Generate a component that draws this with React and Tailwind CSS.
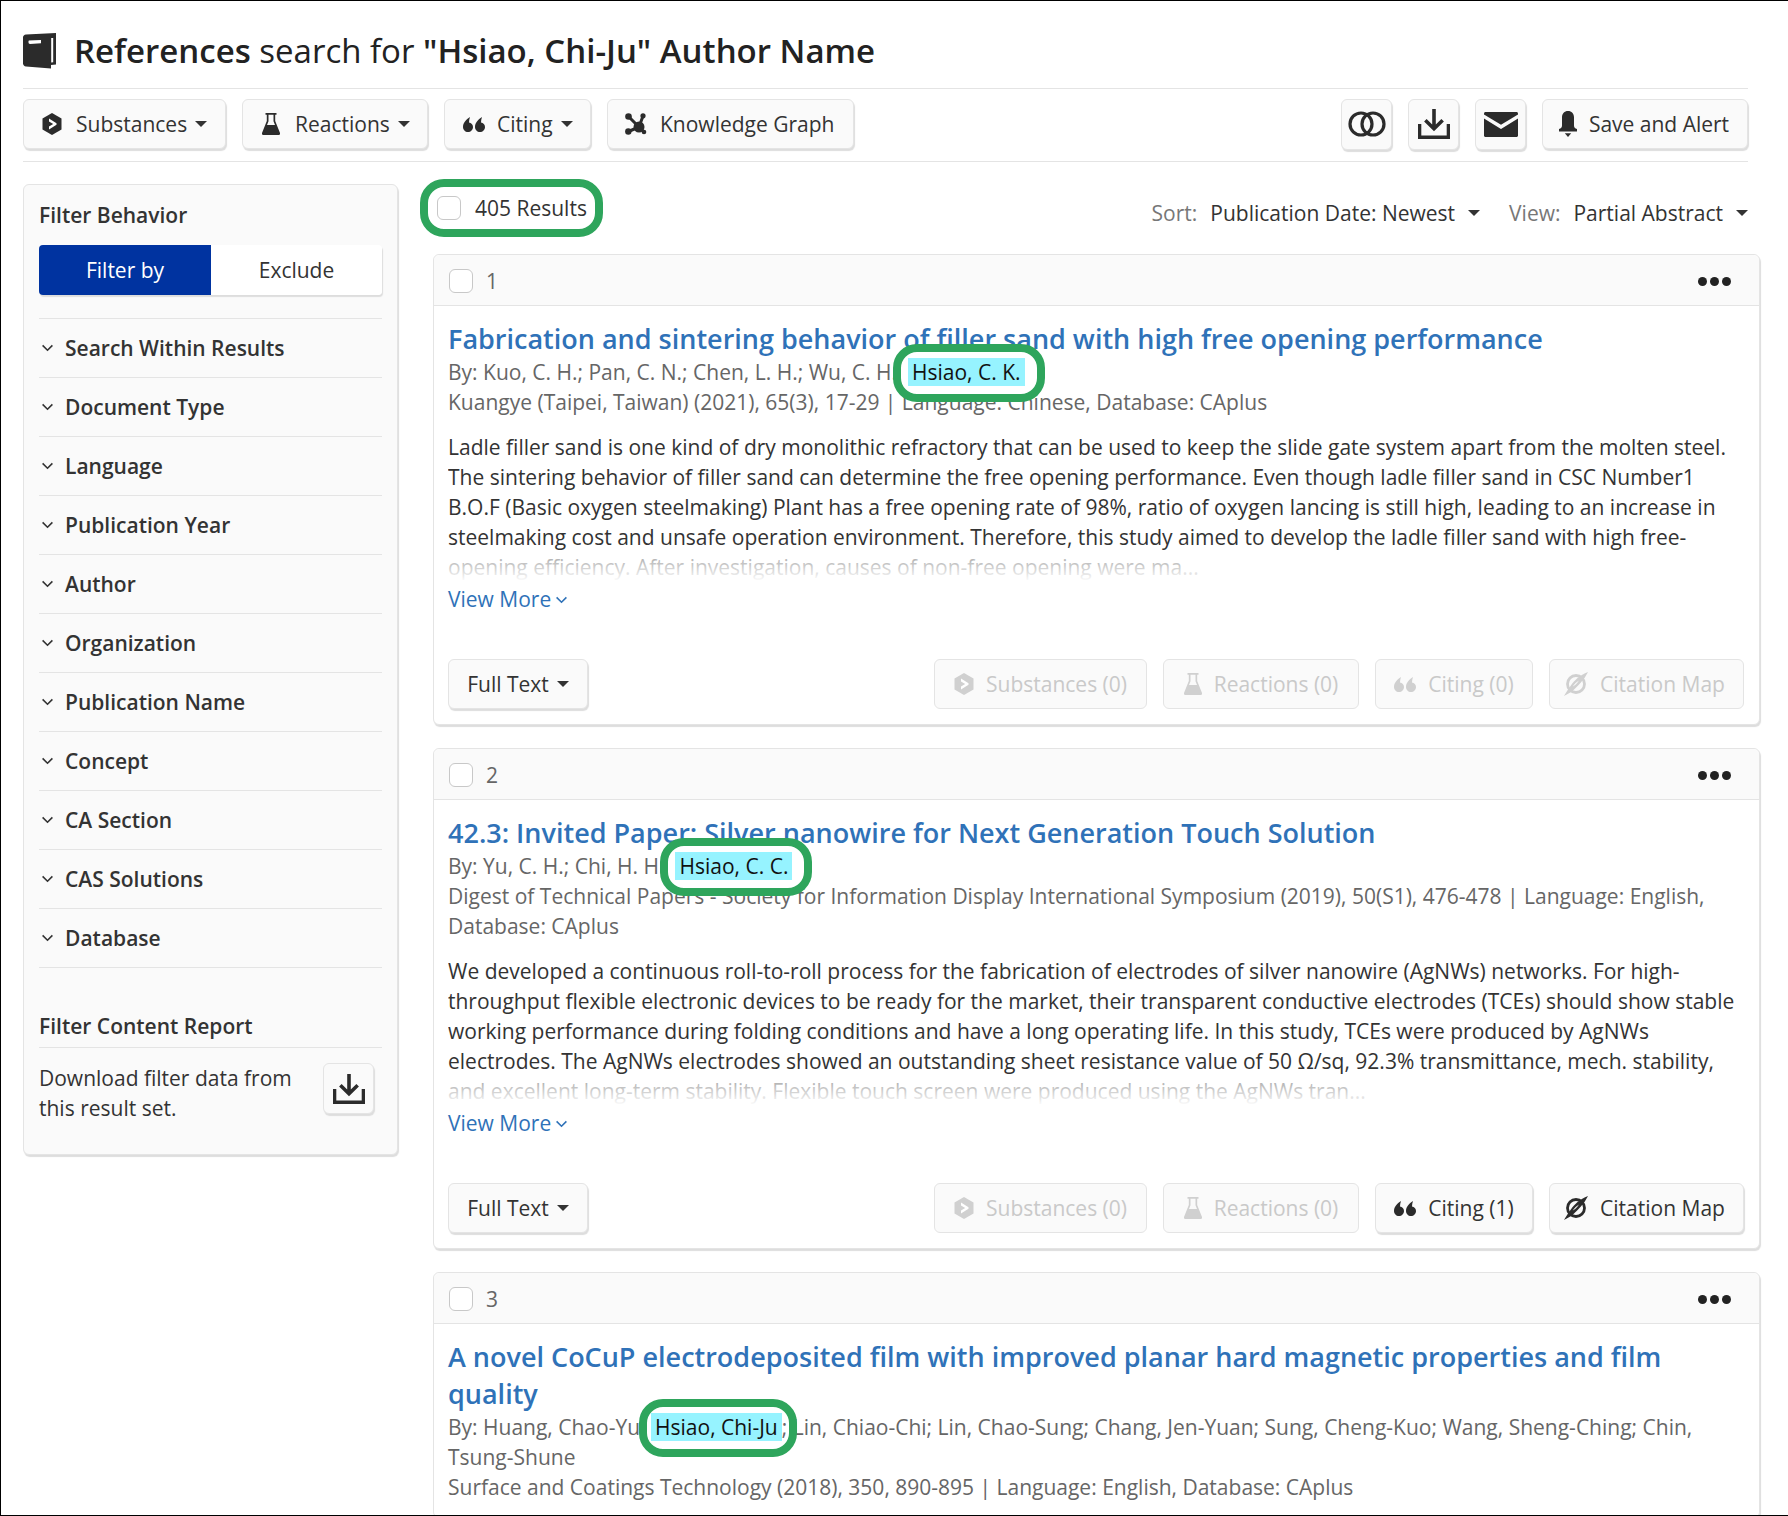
import React from "react";

const BookIcon = ({ className }) => (
  <svg viewBox="0 0 34 36" className={className}>
    <path fill="#2b2b2b" d="M3 1.500 33 0v31.500l-5 .6V35.600L3 33.400C1.400 33.200 0 32 0 30.400V4.500C0 2.800 1.300 1.700 3 1.500Z" />
    <path fill="#fff" d="M5.500 7.500 18 7v3.200L7 11c-1 0-1.500-.6-1.500-1.700 0-1 0-1.700.5-1.800Z" />
    <path fill="#fff" d="M28.200 5h2v24.200l-2 .3V5Z" />
  </svg>
);
const HexIcon = ({ className }) => (
  <svg viewBox="0 0 20 22" className={className}>
    <path fill="currentColor" d="M10 0 19.500 5.500v11L10 22 .5 16.500v-11Z" />
    <path fill="#fff" d="M7 5.500 14.500 10.200v1.600L7 16.500v-3l4.200-2.500L7 8.500Z" />
  </svg>
);
const FlaskIcon = ({ className }) => (
  <svg viewBox="0 0 18 22" className={className}>
    <path fill="currentColor" fillRule="evenodd" d="M3.500 0h11v1.800h-1.300v6.100L18 20c.3 1.100-.4 2-1.500 2h-15C.4 22-.3 21.100 0 20L4.800 7.900V1.800H3.500ZM6.500 1.800V8.300L5 12h8l-1.500-3.700V1.800Z" />
  </svg>
);
const QuoteIcon = ({ className }) => (
  <svg viewBox="0 0 22 15" className={className}>
    <path fill="currentColor" d="M7 0C3 2.500 0 6 0 10c0 2.900 2.200 5 5 5s5-2.100 5-5c0-2.500-1.800-4.400-4-4.600C6 3.500 6.400 1.800 7 0Z" />
    <path fill="currentColor" d="M19 0c-4 2.500-7 6-7 10 0 2.900 2.200 5 5 5s5-2.100 5-5c0-2.500-1.800-4.400-4-4.600C18 3.500 18.400 1.800 19 0Z" />
  </svg>
);
const GraphIcon = ({ className }) => (
  <svg viewBox="0 0 22 22" className={className}>
    <g stroke="currentColor" strokeWidth="3" fill="none">
      <path d="M3.500 3.500 14 14M18 3 14 14M3.500 18.500 14 14M14 14l5 5" />
    </g>
    <g fill="currentColor">
      <circle cx="3.500" cy="3.500" r="3.300" />
      <circle cx="18" cy="2.800" r="2.600" />
      <circle cx="3.300" cy="18.500" r="3.200" />
      <circle cx="14" cy="14" r="5.500" />
      <circle cx="19" cy="19" r="2.300" />
    </g>
  </svg>
);
const RingsIcon = ({ className }) => (
  <svg viewBox="0 0 38 26" className={className}>
    <circle cx="13" cy="13" r="11" fill="none" stroke="currentColor" strokeWidth="3.200" />
    <circle cx="25" cy="13" r="11" fill="none" stroke="currentColor" strokeWidth="3.200" />
  </svg>
);
const DownloadIcon = ({ className }) => (
  <svg viewBox="0 0 32 30" className={className}>
    <path fill="currentColor" d="M14.200 0h3.600v15.500l5.600-5.400 2.500 2.500L16 22.300 6.100 12.600l2.500-2.500 5.600 5.400Z" />
    <path fill="currentColor" d="M0 15h3.300v11.500h25.400V15H32v15H0Z" />
  </svg>
);
const MailIcon = ({ className }) => (
  <svg viewBox="0 0 34 25" className={className}>
    <path fill="currentColor" d="M1.500 0h31c.8 0 1.500.7 1.500 1.500v.9L17 12.800 0 2.400v-.9C0 .7.700 0 1.500 0Z" />
    <path fill="currentColor" d="M0 6.500 17 17 34 6.500v17c0 .8-.7 1.500-1.500 1.500h-31C.7 25 0 24.300 0 23.500Z" />
  </svg>
);
const BellIcon = ({ className }) => (
  <svg viewBox="0 0 18 26" className={className}>
    <path fill="currentColor" d="M9 0c3.600 0 6 2.600 6 6.200v8.300c0 1.700.9 3 3 3.400V20.500H0v-2.600c2.100-.4 3-1.700 3-3.400V6.200C3 2.600 5.400 0 9 0Z" />
    <path fill="currentColor" d="M5.800 22.300h6.400L9 26Z" />
  </svg>
);
const MapIcon = ({ className }) => (
  <svg viewBox="0 0 24 24" className={className}>
    <circle cx="12" cy="12" r="8.500" fill="none" stroke="currentColor" strokeWidth="2.800" />
    <path fill="currentColor" d="M24 0C20 1.500 16.500 3.500 13 6.500 9 10 5 15.500 0 24c3-1.600 6-2.900 9-5.500C14 14 20 8 24 0Z" />
    <path fill="#fafafa" d="M15 8.500c-2.400 1.400-4.500 3.400-6.300 6 2.300-.9 4.400-3 6.300-6Z" />
  </svg>
);
const ChevronDown = ({ className }) => (
  <svg viewBox="0 0 14 9" className={className}>
    <path d="M1.500 1.500 7 7l5.500-5.500" fill="none" stroke="currentColor" strokeWidth="1.800" />
  </svg>
);
const Caret = () => (
  <span className="inline-block h-0 w-0 border-x-[6px] border-t-[6px] border-x-transparent border-t-[#333]" />
);

const ToolButton = ({ widthClass, children }) => (
  <button className={`flex h-[50px] items-center rounded-md border border-[#e4e4e4] bg-[#fafafa] shadow-[1px_2px_1px_#ddd] ${widthClass}`}>
    {children}
  </button>
);

const Check = () => (
  <span className="block h-[24px] w-[24px] shrink-0 rounded-md border border-[#c8c8c8] bg-white" />
);

const Oval = ({ insetClass, children, after }) => (
  <span className="relative">
    <span className={`absolute z-10 rounded-[24px] border-[8px] border-[#2ea55c] bg-white ${insetClass}`} />
    <span className="relative z-20 bg-[#96f3ff] px-[4px] text-[#111]">{children}</span>
    {after && <span className="relative z-20 text-[#666]">{after}</span>}
  </span>
);

const ActionButton = ({ icon: Icon, iconClass, label, widthClass, disabled }) => (
  <button
    className={`flex h-[50px] items-center justify-center gap-[12px] rounded-md border border-[#e4e4e4] bg-[#fafafa] ${widthClass} ${
      disabled ? "text-[#c9c9c9]" : "text-[#333] shadow-[1px_2px_1px_#ddd]"
    }`}
  >
    <Icon className={`${iconClass} ${disabled ? "text-[#d0d0d0]" : "text-[#2b2b2b]"}`} />
    {label}
  </button>
);

const Card = ({ n, title, authors, journal, abstract, citing, clip }) => (
  <div className="rounded-md border border-[#e4e4e4] bg-white shadow-[1px_2px_1px_#ddd]">
    <div className="flex h-[51px] items-center rounded-t-md border-b border-[#e4e4e4] bg-[#fafafa] pl-[15px] pr-[28px] pt-[2px]">
      <Check />
      <span className="ml-[13px] text-[#666]">{n}</span>
      <span className="ml-auto flex gap-[3px]">
        <span className="h-[9px] w-[9px] rounded-full bg-[#222]" />
        <span className="h-[9px] w-[9px] rounded-full bg-[#222]" />
        <span className="h-[9px] w-[9px] rounded-full bg-[#222]" />
      </span>
    </div>
    <div className="pb-[15px] pl-[14px] pr-[15px] pt-[14px]">
      <h2 className="text-[27px] font-semibold leading-[37px] text-[#2f72b8]">{title}</h2>
      <div className="text-[#666]">{authors}</div>
      <div className="text-[#666]">{journal}</div>
      {!clip && (
        <>
          <div className="relative mt-[15px] h-[150px] overflow-hidden text-[#333]">
            {abstract}
            <div className="absolute inset-x-0 bottom-0 h-[32px] bg-linear-to-b from-white/50 to-white" />
          </div>
          <div className="mt-[2px] flex items-center gap-[4px] text-[#2f72b8]">
            View More
            <ChevronDown className="mt-[2px] h-[8px] w-[13px]" />
          </div>
          <div className="mt-[45px] flex items-center">
            <button className="flex h-[50px] w-[140px] items-center justify-center gap-[8px] rounded-md border border-[#e4e4e4] bg-[#fafafa] shadow-[1px_2px_1px_#ddd]">
              Full Text <Caret />
            </button>
            <div className="ml-auto flex gap-[16px]">
              <ActionButton disabled icon={HexIcon} iconClass="h-[22px] w-[20px]" label="Substances (0)" widthClass="w-[213px]" />
              <ActionButton disabled icon={FlaskIcon} iconClass="h-[22px] w-[18px]" label="Reactions (0)" widthClass="w-[196px]" />
              <ActionButton disabled={!citing} icon={QuoteIcon} iconClass="h-[15px] w-[22px]" label={citing ? "Citing (1)" : "Citing (0)"} widthClass="w-[158px]" />
              <ActionButton disabled={!citing} icon={MapIcon} iconClass="h-[24px] w-[24px]" label="Citation Map" widthClass="w-[195px] pr-[4px]" />
            </div>
          </div>
        </>
      )}
    </div>
  </div>
);

const filters = [
  "Search Within Results",
  "Document Type",
  "Language",
  "Publication Year",
  "Author",
  "Organization",
  "Publication Name",
  "Concept",
  "CA Section",
  "CAS Solutions",
  "Database",
];

export default function App() {
  return (
    <div className="h-[1516px] w-[1788px] overflow-hidden border-b border-l border-t border-black bg-white font-['Open_Sans',sans-serif] text-[21px] leading-[30px] text-[#333]">
      <div className="pl-[22px]">
        <header className="mr-[40px] flex h-[88px] items-center gap-[17px] border-b border-[#e4e4e4] pt-[13px]">
          <BookIcon className="h-[36px] w-[34px]" />
          <h1 className="text-[33px] leading-[44px] text-[#222]">
            <span className="font-semibold">References</span> search for{" "}
            <span className="font-semibold">"Hsiao, Chi-Ju" Author Name</span>
          </h1>
        </header>

        <div className="mr-[40px] flex h-[73px] items-center justify-between border-b border-[#e4e4e4] pb-[2px]">
          <div className="flex gap-[16px]">
            <ToolButton widthClass="w-[203px] pl-[18px]">
              <HexIcon className="h-[22px] w-[20px] text-[#2b2b2b]" />
              <span className="ml-[14px]">Substances</span>
              <span className="ml-[8px] flex"><Caret /></span>
            </ToolButton>
            <ToolButton widthClass="w-[186px] pl-[19px]">
              <FlaskIcon className="h-[22px] w-[18px] text-[#2b2b2b]" />
              <span className="ml-[15px]">Reactions</span>
              <span className="ml-[8px] flex"><Caret /></span>
            </ToolButton>
            <ToolButton widthClass="w-[147px] pl-[18px]">
              <QuoteIcon className="h-[15px] w-[22px] text-[#2b2b2b]" />
              <span className="ml-[12px]">Citing</span>
              <span className="ml-[8px] flex"><Caret /></span>
            </ToolButton>
            <ToolButton widthClass="w-[247px] pl-[17px]">
              <GraphIcon className="h-[22px] w-[22px] text-[#2b2b2b]" />
              <span className="ml-[13px]">Knowledge Graph</span>
            </ToolButton>
          </div>
          <div className="flex items-center gap-[16px]">
            <button className="flex h-[51px] w-[51px] items-center justify-center rounded-md border border-[#e4e4e4] bg-[#fafafa] shadow-[1px_2px_1px_#ddd]">
              <RingsIcon className="h-[26px] w-[38px] text-[#2b2b2b]" />
            </button>
            <button className="flex h-[51px] w-[51px] items-center justify-center rounded-md border border-[#e4e4e4] bg-[#fafafa] shadow-[1px_2px_1px_#ddd]">
              <DownloadIcon className="h-[30px] w-[32px] text-[#2b2b2b]" />
            </button>
            <button className="flex h-[51px] w-[51px] items-center justify-center rounded-md border border-[#e4e4e4] bg-[#fafafa] shadow-[1px_2px_1px_#ddd]">
              <MailIcon className="h-[25px] w-[34px] text-[#2b2b2b]" />
            </button>
            <button className="flex h-[50px] w-[206px] items-center justify-center gap-[12px] rounded-md border border-[#e4e4e4] bg-[#fafafa] pr-[2px] shadow-[1px_2px_1px_#ddd]">
              <BellIcon className="h-[26px] w-[18px] text-[#2b2b2b]" />
              Save and Alert
            </button>
          </div>
        </div>

        <div className="flex items-start">
          <aside className="mt-[22px] h-[971px] w-[375px] shrink-0 rounded-md border border-[#e4e4e4] bg-[#fafafa] px-[15px] shadow-[1px_2px_1px_#ddd]">
            <div className="flex h-[60px] items-end pb-[15px] font-semibold">Filter Behavior</div>
            <div className="flex h-[50px] rounded-sm shadow-[1px_2px_1px_#ddd]">
              <div className="flex w-[172px] items-center justify-center rounded-l-sm bg-[#0033a0] text-white">Filter by</div>
              <div className="flex flex-1 items-center justify-center rounded-r-sm bg-white">Exclude</div>
            </div>
            <div className="mt-[23px] border-t border-[#e4e4e4]">
              {filters.map((f) => (
                <div key={f} className="flex h-[59px] items-center border-b border-[#e4e4e4] pl-[2px] font-semibold">
                  <ChevronDown className="h-[8px] w-[13px] text-[#333]" />
                  <span className="ml-[11px]">{f}</span>
                </div>
              ))}
            </div>
            <div className="mt-[43px] border-b border-[#e4e4e4] pb-[6px] font-semibold">Filter Content Report</div>
            <div className="flex items-start justify-between pr-[8px] pt-[15px]">
              <div>
                Download filter data from
                <br />
                this result set.
              </div>
              <button className="flex h-[51px] w-[51px] items-center justify-center rounded-md border border-[#e4e4e4] bg-[#fafafa] shadow-[1px_2px_1px_#ddd]">
                <DownloadIcon className="h-[30px] w-[32px] text-[#2b2b2b]" />
              </button>
            </div>
          </aside>

          <main className="ml-[35px] w-[1327px] shrink-0">
            <div className="flex items-start justify-between pt-[17px]">
              <div className="-ml-[13px] flex h-[58px] w-[183px] items-center rounded-[24px] border-[8px] border-[#2ea55c] pl-[9px]">
                <Check />
                <span className="ml-[14px] whitespace-nowrap">405 Results</span>
              </div>
              <div className="mr-[12px] mt-[19px] flex items-center">
                <span className="text-[#777]">Sort:</span>
                <span className="ml-[13px]">Publication Date: Newest</span>
                <span className="ml-[13px] flex"><Caret /></span>
                <span className="ml-[29px] text-[#777]">View:</span>
                <span className="ml-[13px]">Partial Abstract</span>
                <span className="ml-[13px] flex"><Caret /></span>
              </div>
            </div>

            <div className="mt-[17px] flex flex-col gap-[23px]">
              <Card
                n="1"
                title="Fabrication and sintering behavior of filler sand with high free opening performance"
                authors={
                  <>
                    By: Kuo, C. H.; Pan, C. N.; Chen, L. H.; Wu, C. H.;{" "}
                    <Oval insetClass="-left-[15px] -right-[20px] -top-[14px] -bottom-[16px]">Hsiao, C. K.</Oval>
                  </>
                }
                journal="Kuangye (Taipei, Taiwan) (2021), 65(3), 17-29 | Language: Chinese, Database: CAplus"
                abstract="Ladle filler sand is one kind of dry monolithic refractory that can be used to keep the slide gate system apart from the molten steel. The sintering behavior of filler sand can determine the free opening performance. Even though ladle filler sand in CSC Number1 B.O.F (Basic oxygen steelmaking) Plant has a free opening rate of 98%, ratio of oxygen lancing is still high, leading to an increase in steelmaking cost and unsafe operation environment. Therefore, this study aimed to develop the ladle filler sand with high free-opening efficiency. After investigation, causes of non-free opening were ma..."
              />
              <Card
                n="2"
                citing
                title="42.3: Invited Paper: Silver nanowire for Next Generation Touch Solution"
                authors={
                  <>
                    By: Yu, C. H.; Chi, H. H.;{" "}
                    <Oval insetClass="-left-[15px] -right-[20px] -top-[14px] -bottom-[16px]">Hsiao, C. C.</Oval>
                  </>
                }
                journal="Digest of Technical Papers - Society for Information Display International Symposium (2019), 50(S1), 476-478 | Language: English, Database: CAplus"
                abstract="We developed a continuous roll-to-roll process for the fabrication of electrodes of silver nanowire (AgNWs) networks. For high-throughput flexible electronic devices to be ready for the market, their transparent conductive electrodes (TCEs) should show stable working performance during folding conditions and have a long operating life. In this study, TCEs were produced by AgNWs electrodes. The AgNWs electrodes showed an outstanding sheet resistance value of 50 Ω/sq, 92.3% transmittance, mech. stability, and excellent long-term stability. Flexible touch screen were produced using the AgNWs tran..."
              />
              <Card
                n="3"
                clip
                title="A novel CoCuP electrodeposited film with improved planar hard magnetic properties and film quality"
                authors={
                  <>
                    By: Huang, Chao-Yu;{" "}
                    <Oval insetClass="-left-[12px] -right-[10px] -top-[14px] -bottom-[16px]" after=";">Hsiao, Chi-Ju</Oval>{" "}
                    Lin, Chiao-Chi; Lin, Chao-Sung; Chang, Jen-Yuan; Sung, Cheng-Kuo; Wang, Sheng-Ching; Chin,{" "}
                    <span className="whitespace-nowrap">Tsung-Shune</span>
                  </>
                }
                journal="Surface and Coatings Technology (2018), 350, 890-895 | Language: English, Database: CAplus"
              />
            </div>
          </main>
        </div>
      </div>
    </div>
  );
}
